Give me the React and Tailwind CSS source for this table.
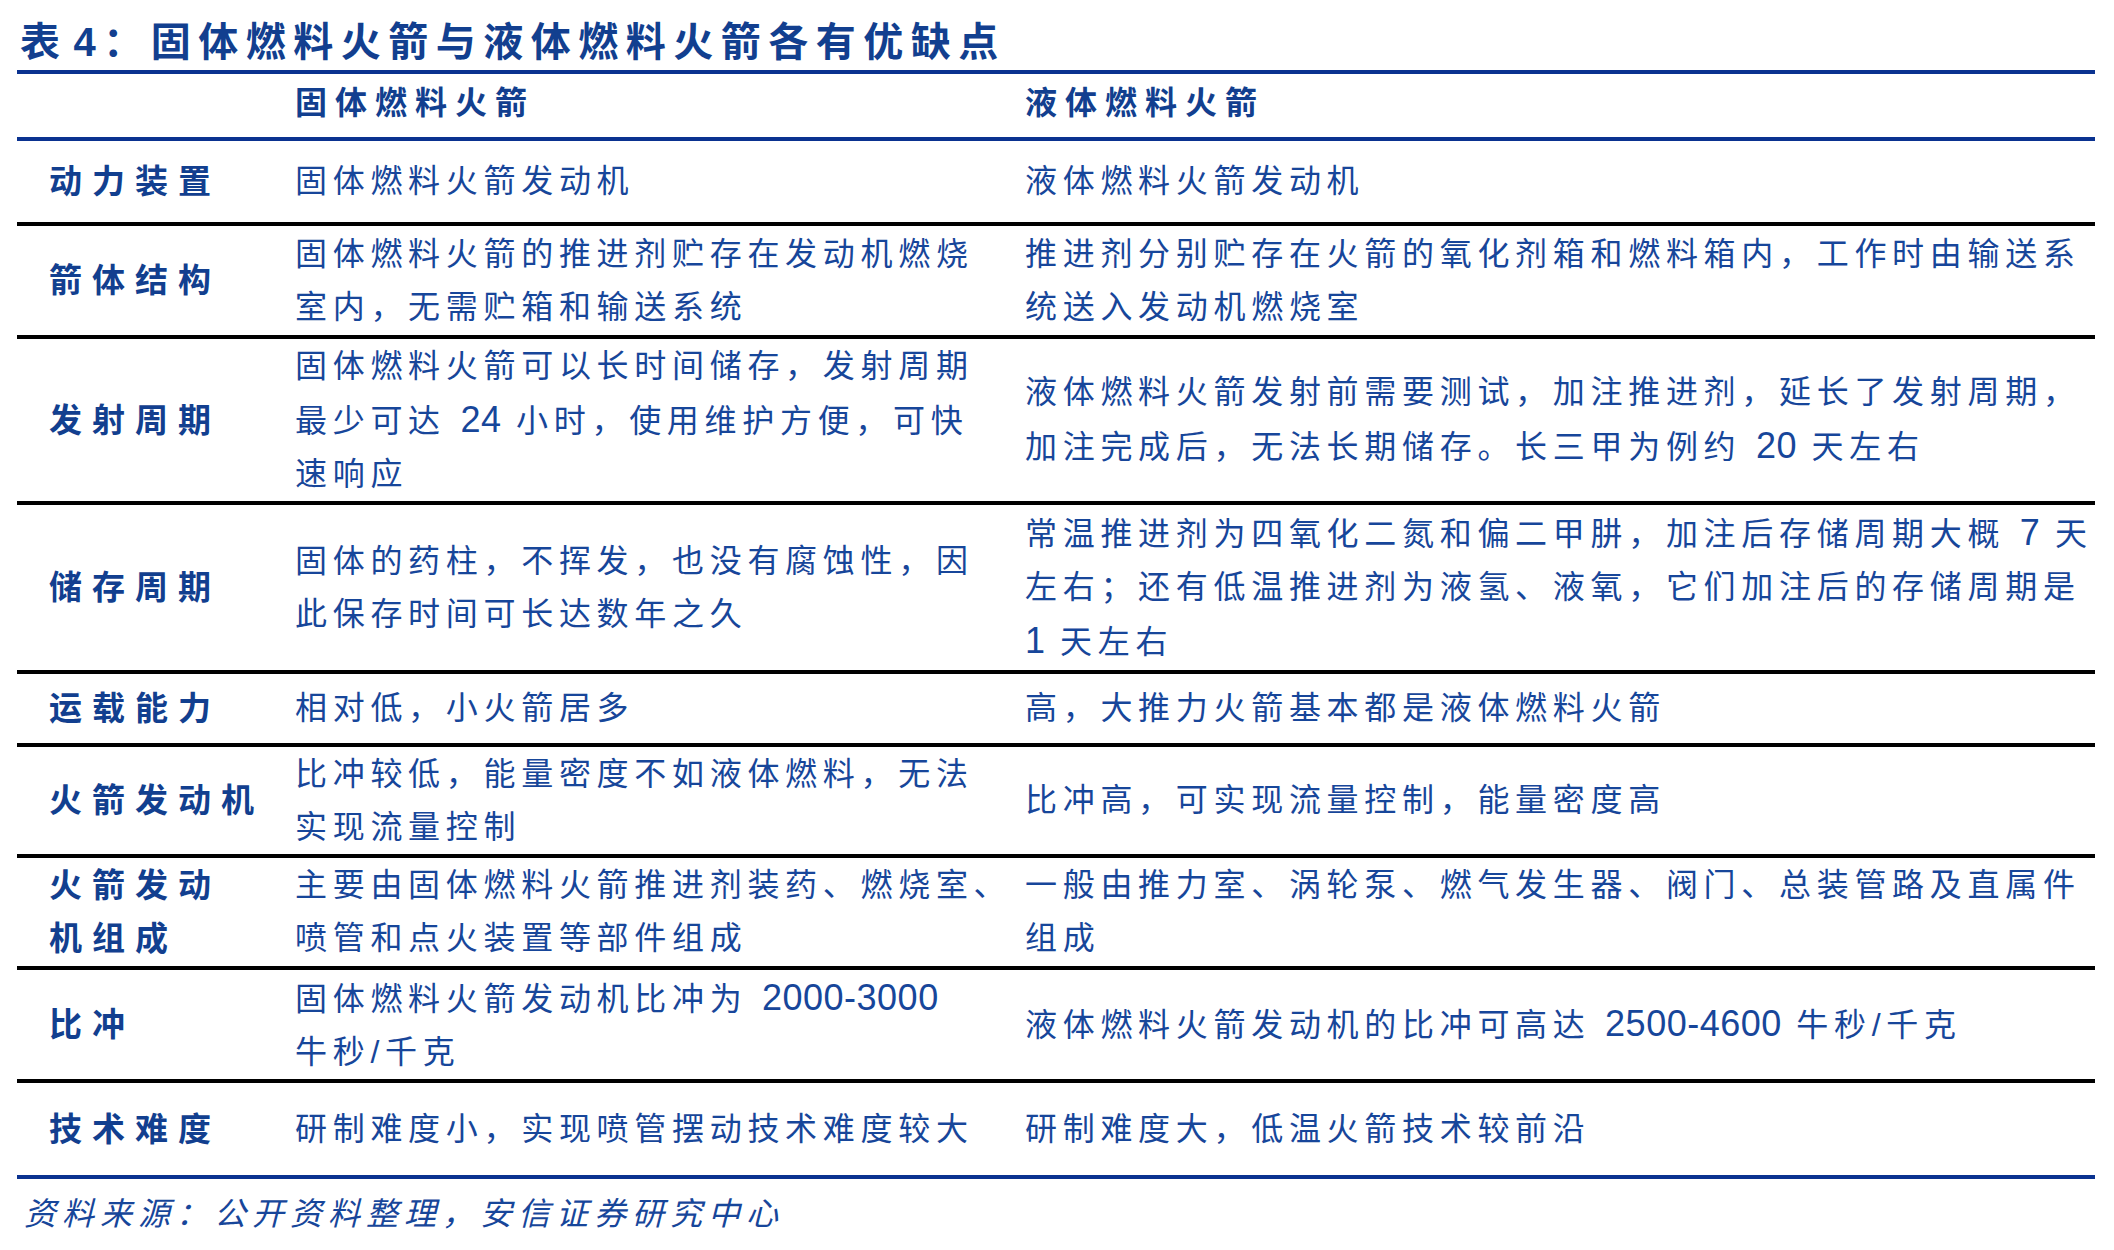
const FONT = { fontFamily: '"Liberation Sans", "Noto Sans CJK SC", sans-serif' };

const rows = [
  { h: 'h-[85px]', label: ['动力装置'], a: ['固体燃料火箭发动机'], b: ['液体燃料火箭发动机'] },
  {
    h: 'h-[113px]',
    label: ['箭体结构'],
    a: ['固体燃料火箭的推进剂贮存在发动机燃烧', '室内，无需贮箱和输送系统'],
    b: ['推进剂分别贮存在火箭的氧化剂箱和燃料箱内，工作时由输送系', '统送入发动机燃烧室'],
  },
  {
    h: 'h-[166px]',
    label: ['发射周期'],
    a: ['固体燃料火箭可以长时间储存，发射周期', '最少可达 24 小时，使用维护方便，可快', '速响应'],
    b: ['液体燃料火箭发射前需要测试，加注推进剂，延长了发射周期，', '加注完成后，无法长期储存。长三甲为例约 20 天左右'],
  },
  {
    h: 'h-[169px]',
    label: ['储存周期'],
    a: ['固体的药柱，不挥发，也没有腐蚀性，因', '此保存时间可长达数年之久'],
    b: [
      '常温推进剂为四氧化二氮和偏二甲肼，加注后存储周期大概 7 天',
      '左右；还有低温推进剂为液氢、液氧，它们加注后的存储周期是',
      '1 天左右',
    ],
  },
  { h: 'h-[73px]', label: ['运载能力'], a: ['相对低，小火箭居多'], b: ['高，大推力火箭基本都是液体燃料火箭'] },
  {
    h: 'h-[111px]',
    label: ['火箭发动机'],
    a: ['比冲较低，能量密度不如液体燃料，无法', '实现流量控制'],
    b: ['比冲高，可实现流量控制，能量密度高'],
  },
  {
    h: 'h-[112px]',
    label: ['火箭发动', '机组成'],
    a: ['主要由固体燃料火箭推进剂装药、燃烧室、', '喷管和点火装置等部件组成'],
    b: ['一般由推力室、涡轮泵、燃气发生器、阀门、总装管路及直属件', '组成'],
  },
  {
    h: 'h-[113px]',
    label: ['比冲'],
    a: ['固体燃料火箭发动机比冲为 2000-3000', '牛秒/千克'],
    b: ['液体燃料火箭发动机的比冲可高达 2500-4600 牛秒/千克'],
  },
  {
    h: 'h-[96px]',
    label: ['技术难度'],
    a: ['研制难度小，实现喷管摆动技术难度较大'],
    b: ['研制难度大，低温火箭技术较前沿'],
    last: true,
  },
];

// numbers are set in a larger, unspaced Arial-like face
function Line({ text }) {
  const parts = text.split(/([0-9][0-9-]*)/);
  return (
    <div className="whitespace-nowrap">
      {parts.map((p, i) =>
        /^[0-9]/.test(p) ? (
          <span key={i} className="text-[36px] tracking-[0.5px]">{p}</span>
        ) : (
          <span key={i}>{p}</span>
        )
      )}
    </div>
  );
}

function Cell({ lines, className }) {
  return (
    <div className={`flex flex-col justify-center ${className}`}>
      {lines.map((l, i) => (
        <Line key={i} text={l} />
      ))}
    </div>
  );
}

export default function App() {
  return (
    <div className="w-[2114px] h-[1250px] bg-white text-[#17469a]" style={FONT}>
      <div className="h-[70px] flex items-center pt-[14px] pl-[20px] text-[40px] font-bold tracking-[7.5px] text-[#123f8f] whitespace-nowrap">
        表<span className="ml-[6px]">4：</span>固体燃料火箭与液体燃料火箭各有优缺点
      </div>

      <div className="ml-[17px] w-[2078px]">
        {/* header */}
        <div className="h-[71px] grid grid-cols-[248px_728px_1102px] border-t-4 border-b-4 border-[#0a3290] text-[32px] font-bold tracking-[8px] text-[#123f8f]">
          <div />
          <div className="flex items-center pl-[30px] pb-[6px]">固体燃料火箭</div>
          <div className="flex items-center pl-[32px] pb-[6px]">液体燃料火箭</div>
        </div>

        {rows.map((r, i) => (
          <div
            key={i}
            className={`${r.h} grid grid-cols-[248px_728px_1102px] border-b-4 ${
              r.last ? 'border-[#0a3290]' : 'border-black'
            } text-[32px] leading-[53px]`}
          >
            <Cell lines={r.label} className="pl-[32px] text-[33px] font-bold tracking-[10px] text-[#123f8f]" />
            <Cell lines={r.a} className="pl-[30px] tracking-[5.7px]" />
            <Cell lines={r.b} className="pl-[32px] tracking-[5.7px]" />
          </div>
        ))}
      </div>

      <div className="h-[70px] flex items-center pl-[24px] text-[32px] italic tracking-[6px] whitespace-nowrap">
        资料来源：公开资料整理，安信证券研究中心
      </div>
    </div>
  );
}
